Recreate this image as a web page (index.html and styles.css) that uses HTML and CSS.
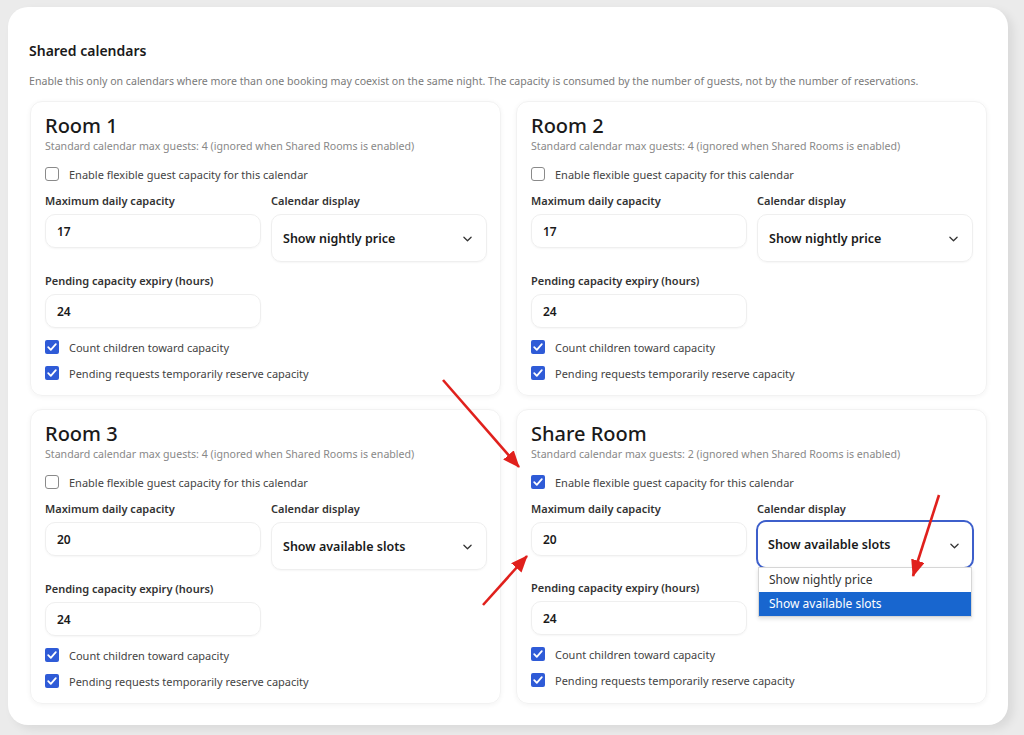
FILE: index.html
```html
<!DOCTYPE html>
<html lang="en">
<head>
<meta charset="utf-8">
<title>Shared calendars</title>
<link rel="stylesheet" href="styles.css">
</head>
<body>
<div class="panel">
  <h2 class="title">Shared calendars</h2>
  <p class="desc">Enable this only on calendars where more than one booking may coexist on the same night. The capacity is consumed by the number of guests, not by the number of reservations.</p>
  <div class="grid">

    <section class="card">
      <h3 class="room">Room 1</h3>
      <p class="sub">Standard calendar max guests: 4 (ignored when Shared Rooms is enabled)</p>
      <label class="check first"><span class="box"></span>Enable flexible guest capacity for this calendar</label>
      <div class="fields">
        <div class="field"><div class="lbl">Maximum daily capacity</div><div class="input">17</div></div>
        <div class="field"><div class="lbl">Calendar display</div><div class="select"><span>Show nightly price</span><svg class="chev" viewBox="0 0 10 6"><path d="M1 1l4 4 4-4"/></svg></div></div>
      </div>
      <div class="field second"><div class="lbl">Pending capacity expiry (hours)</div><div class="input">24</div></div>
      <label class="check c1"><span class="box on"><svg viewBox="0 0 14 14"><path d="M3.2 7.2l2.6 2.6 5-5.6"/></svg></span>Count children toward capacity</label>
      <label class="check c2"><span class="box on"><svg viewBox="0 0 14 14"><path d="M3.2 7.2l2.6 2.6 5-5.6"/></svg></span>Pending requests temporarily reserve capacity</label>
    </section>

    <section class="card">
      <h3 class="room">Room 2</h3>
      <p class="sub">Standard calendar max guests: 4 (ignored when Shared Rooms is enabled)</p>
      <label class="check first"><span class="box"></span>Enable flexible guest capacity for this calendar</label>
      <div class="fields">
        <div class="field"><div class="lbl">Maximum daily capacity</div><div class="input">17</div></div>
        <div class="field"><div class="lbl">Calendar display</div><div class="select"><span>Show nightly price</span><svg class="chev" viewBox="0 0 10 6"><path d="M1 1l4 4 4-4"/></svg></div></div>
      </div>
      <div class="field second"><div class="lbl">Pending capacity expiry (hours)</div><div class="input">24</div></div>
      <label class="check c1"><span class="box on"><svg viewBox="0 0 14 14"><path d="M3.2 7.2l2.6 2.6 5-5.6"/></svg></span>Count children toward capacity</label>
      <label class="check c2"><span class="box on"><svg viewBox="0 0 14 14"><path d="M3.2 7.2l2.6 2.6 5-5.6"/></svg></span>Pending requests temporarily reserve capacity</label>
    </section>

    <section class="card">
      <h3 class="room">Room 3</h3>
      <p class="sub">Standard calendar max guests: 4 (ignored when Shared Rooms is enabled)</p>
      <label class="check first"><span class="box"></span>Enable flexible guest capacity for this calendar</label>
      <div class="fields">
        <div class="field"><div class="lbl">Maximum daily capacity</div><div class="input">20</div></div>
        <div class="field"><div class="lbl">Calendar display</div><div class="select"><span>Show available slots</span><svg class="chev" viewBox="0 0 10 6"><path d="M1 1l4 4 4-4"/></svg></div></div>
      </div>
      <div class="field second"><div class="lbl">Pending capacity expiry (hours)</div><div class="input">24</div></div>
      <label class="check c1"><span class="box on"><svg viewBox="0 0 14 14"><path d="M3.2 7.2l2.6 2.6 5-5.6"/></svg></span>Count children toward capacity</label>
      <label class="check c2"><span class="box on"><svg viewBox="0 0 14 14"><path d="M3.2 7.2l2.6 2.6 5-5.6"/></svg></span>Pending requests temporarily reserve capacity</label>
    </section>

    <section class="card">
      <h3 class="room">Share Room</h3>
      <p class="sub">Standard calendar max guests: 2 (ignored when Shared Rooms is enabled)</p>
      <label class="check first"><span class="box on"><svg viewBox="0 0 14 14"><path d="M3.2 7.2l2.6 2.6 5-5.6"/></svg></span>Enable flexible guest capacity for this calendar</label>
      <div class="fields">
        <div class="field"><div class="lbl">Maximum daily capacity</div><div class="input">20</div></div>
        <div class="field"><div class="lbl">Calendar display</div>
          <div class="select focus"><span>Show available slots</span><svg class="chev" viewBox="0 0 10 6"><path d="M1 1l4 4 4-4"/></svg>
            <ul class="menu">
              <li>Show nightly price</li>
              <li class="sel">Show available slots</li>
            </ul>
          </div>
        </div>
      </div>
      <div class="field second"><div class="lbl">Pending capacity expiry (hours)</div><div class="input">24</div></div>
      <label class="check c1"><span class="box on"><svg viewBox="0 0 14 14"><path d="M3.2 7.2l2.6 2.6 5-5.6"/></svg></span>Count children toward capacity</label>
      <label class="check c2"><span class="box on"><svg viewBox="0 0 14 14"><path d="M3.2 7.2l2.6 2.6 5-5.6"/></svg></span>Pending requests temporarily reserve capacity</label>
    </section>

  </div>
</div>

<svg class="arrows" viewBox="0 0 1024 735" width="1024" height="735">
  <defs>
    <marker id="ah" markerUnits="userSpaceOnUse" markerWidth="18" markerHeight="14" refX="16" refY="7" orient="auto">
      <path d="M0 0L17 7L0 14z" fill="#e0201c"/>
    </marker>
  </defs>
  <line x1="443" y1="380" x2="519" y2="467" marker-end="url(#ah)"/>
  <line x1="483" y1="605" x2="527" y2="556" marker-end="url(#ah)"/>
  <line x1="939" y1="495" x2="913" y2="576" marker-end="url(#ah)"/>
</svg>
</body>
</html>
```

FILE: styles.css
```css
* { box-sizing: border-box; }
html, body { margin: 0; padding: 0; }
body {
  width: 1024px;
  height: 735px;
  background: #ebebeb;
  font-family: "Noto Sans", "Open Sans", sans-serif;
  color: #1f1f1f;
  position: relative;
  overflow: hidden;
  padding-top: 7px;
  padding-left: 8px;
}
.panel {
  width: 1000px;
  height: 718px;
  background: #ffffff;
  border-radius: 20px;
  box-shadow: 5px 4px 10px rgba(0,0,0,0.08);
  padding: 34px 20px 0 22px;
}
.title {
  margin: 0 0 0 -1px;
  font-size: 14px;
  line-height: 20px;
  font-weight: 600;
  color: #1a1a1a;
}
.desc {
  margin: 13px 0 0 -1px;
  font-size: 10.6px;
  line-height: 14px;
  color: #7a7a7a;
}
.grid {
  margin-top: 13px;
  display: grid;
  grid-template-columns: 471px 471px;
  column-gap: 15px;
  row-gap: 13px;
}
.card {
  border-radius: 12px;
  border: 1px solid #f2f2f2;
  box-shadow: 0 1px 5px rgba(0,0,0,0.05);
  padding: 11px 14px 14px 14px;
  height: 295px;
}
.room {
  margin: 0;
  font-size: 20px;
  line-height: 26px;
  font-weight: 500;
  color: #1a1a1a;
}
.sub {
  margin: 0;
  font-size: 10.6px;
  line-height: 14px;
  color: #888;
}
.check {
  display: flex;
  align-items: center;
  gap: 10px;
  height: 16px;
  font-size: 11px;
  color: #444;
}
.check.first { margin-top: 13px; }
.check.c1 { margin-top: 11px; }
.check.c2 { margin-top: 10px; }
.box {
  width: 14px;
  height: 14px;
  border: 1px solid #8a8a8a;
  border-radius: 3px;
  background: #fff;
  flex: none;
  display: flex;
}
.box.on {
  border: none;
  background: #2f5bd7;
  border-radius: 2px;
}
.box svg { width: 14px; height: 14px; }
.box svg path { fill: none; stroke: #fff; stroke-width: 1.8; stroke-linecap: round; stroke-linejoin: round; }
.fields {
  margin-top: 12px;
  display: grid;
  grid-template-columns: 216px 216px;
  column-gap: 10px;
  align-items: start;
}
.field.second { margin-top: 12px; width: 216px; }
.lbl {
  font-size: 11px;
  line-height: 14px;
  font-weight: 600;
  color: #333;
  margin-bottom: 6px;
}
.input {
  height: 34px;
  border: 1px solid #efefef;
  border-radius: 10px;
  box-shadow: 0 1px 2px rgba(0,0,0,0.04);
  padding-left: 11px;
  display: flex;
  align-items: center;
  font-size: 12px;
  font-weight: 600;
  color: #1a1a1a;
}
.select {
  position: relative;
  height: 48px;
  border: 1px solid #efefef;
  border-radius: 10px;
  box-shadow: 0 1px 2px rgba(0,0,0,0.04);
  padding: 0 14px 0 11px;
  display: flex;
  align-items: center;
  justify-content: space-between;
  font-size: 12.5px;
  font-weight: 600;
  color: #1a1a1a;
}
.select.focus {
  border: 2px solid #3d5fcb;
  margin: -2px -1px 0 -1px;
  height: 49px;
  padding-left: 10px;
  padding-right: 13px;
}
.chev { width: 9px; height: 6px; margin-top: 2px; }
.chev path { fill: none; stroke: #333; stroke-width: 1.4; stroke-linecap: round; stroke-linejoin: round; }
.menu {
  position: absolute;
  left: 0;
  top: 45px;
  width: 214px;
  margin: 0;
  padding: 0;
  list-style: none;
  background: #fff;
  border: 1px solid #d6d6d6;
  box-shadow: 0 2px 4px rgba(0,0,0,0.12);
  font-weight: 400;
  font-size: 12px;
  z-index: 2;
}
.menu li {
  height: 24px;
  line-height: 24px;
  padding-left: 10px;
  color: #333;
}
.menu li.sel {
  background: #1866cf;
  color: #fff;
}
.arrows {
  position: absolute;
  left: 0;
  top: 0;
  pointer-events: none;
  z-index: 5;
}
.arrows line {
  stroke: #e0201c;
  stroke-width: 2.6;
}
```
